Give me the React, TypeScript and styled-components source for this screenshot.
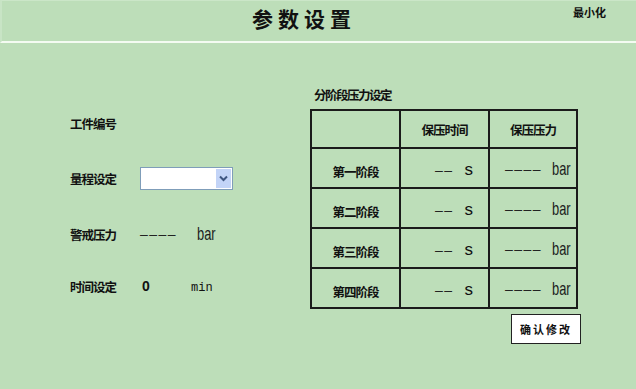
import React from "react";
import styled, { createGlobalStyle } from "styled-components";

const CJK = `"Noto Sans CJK SC", "DejaVu Sans", sans-serif`;

const GlobalStyle = createGlobalStyle`
  *, *::before, *::after {
    margin: 0;
    padding: 0;
    box-sizing: border-box;
  }
  body {
    background: #bddeb9;
    font-family: ${CJK};
    color: #111;
  }
`;

const stages = ["第一阶段", "第二阶段", "第三阶段", "第四阶段"];

function App() {
  return (
    <Page>
      <GlobalStyle />
      <Header>
        <Title>参数设置</Title>
        <Minimize>最小化</Minimize>
      </Header>
      <Body>
        <FormPanel>
          <FormRow $top={69}>
            <Label>工件编号</Label>
          </FormRow>
          <FormRow $top={33}>
            <Label>量程设定</Label>
            <Select>
              <SelectArrow>
                <svg width="9" height="7" viewBox="0 0 9 7">
                  <path d="M1 1.5 L4.5 5 L8 1.5" fill="none" stroke="#3f5680" strokeWidth="2" />
                </svg>
              </SelectArrow>
            </Select>
          </FormRow>
          <FormRow $top={34}>
            <Label>警戒压力</Label>
            <Dashes $width={57}>––––</Dashes>
            <Unit>bar</Unit>
          </FormRow>
          <FormRow $top={30}>
            <Label>时间设定</Label>
            <Zero>0</Zero>
            <Mono>min</Mono>
          </FormRow>
        </FormPanel>
        <StagePanel>
          <StageTitle>分阶段压力设定</StageTitle>
          <Table>
            <Cell />
            <HeadCell>保压时间</HeadCell>
            <HeadCell $shift={-3}>保压压力</HeadCell>
            {stages.map((s) => (
              <React.Fragment key={s}>
                <StageCell>{s}</StageCell>
                <TimeCell>
                  <Dashes>––</Dashes>
                  <Sec>s</Sec>
                </TimeCell>
                <PressCell>
                  <Dashes>––––</Dashes>
                  <Unit>bar</Unit>
                </PressCell>
              </React.Fragment>
            ))}
          </Table>
          <ButtonRow>
            <ConfirmButton>确认修改</ConfirmButton>
          </ButtonRow>
        </StagePanel>
      </Body>
    </Page>
  );
}

const Page = styled.div`
  width: 636px;
  height: 389px;
  display: flex;
  flex-direction: column;
  background: #bddeb9;
  overflow: hidden;
`;

const Header = styled.header`
  height: 43px;
  display: flex;
  align-items: flex-start;
  border-top: 1px solid #cbe6c8;
  border-left: 2px solid #c8e4c5;
  border-bottom: 2px solid #f4fbf2;
`;

const Title = styled.h1`
  margin-left: 250px;
  margin-top: 3px;
  font-size: 21px;
  line-height: 28px;
  font-weight: 700;
  letter-spacing: 5px;
`;

const Minimize = styled.span`
  margin-left: auto;
  margin-right: 30px;
  margin-top: 4px;
  font-size: 11px;
  line-height: 14px;
  font-weight: 700;
`;

const Body = styled.main`
  flex: 1;
  display: flex;
`;

const FormPanel = styled.section`
  width: 310px;
  padding-left: 70px;
  display: flex;
  flex-direction: column;
`;

const FormRow = styled.div<{ $top: number }>`
  margin-top: ${(p) => p.$top}px;
  height: 22px;
  display: flex;
  align-items: center;
`;

const Label = styled.span`
  width: 70px;
  font-size: 12.5px;
  font-weight: 700;
  letter-spacing: -1px;
`;

const Select = styled.div`
  width: 93px;
  height: 23px;
  background: #fff;
  border: 1px solid #7f9db9;
  display: flex;
  justify-content: flex-end;
  align-items: stretch;
  padding: 1px;
`;

const SelectArrow = styled.div`
  width: 15px;
  background: #c3d4f7;
  display: flex;
  align-items: center;
  justify-content: center;
`;

const Dashes = styled.span<{ $width?: number }>`
  width: ${(p) => (p.$width ? `${p.$width}px` : "auto")};
  font-family: "Liberation Sans", sans-serif;
  font-size: 14px;
  letter-spacing: 1.5px;
  color: #222;
`;

const Unit = styled.span`
  display: inline-block;
  font-family: "Liberation Sans", sans-serif;
  font-size: 19px;
  line-height: 22px;
  transform: scaleX(0.68);
  transform-origin: left center;
  color: #1c1c1c;
`;

const Zero = styled.span`
  width: 51px;
  padding-left: 2px;
  font-family: "Liberation Sans", sans-serif;
  font-weight: 700;
  font-size: 14px;
`;

const Mono = styled.span`
  padding-top: 3px;
  font-family: "Liberation Mono", monospace;
  font-size: 12px;
`;

const StagePanel = styled.section`
  padding-top: 44px;
  display: flex;
  flex-direction: column;
  width: 268px;
`;

const StageTitle = styled.h2`
  margin-left: 4px;
  font-size: 12.5px;
  line-height: 16px;
  font-weight: 700;
  letter-spacing: -1.5px;
`;

const Table = styled.div`
  margin-top: 6px;
  display: grid;
  grid-template-columns: 87px 87px 86px;
  grid-template-rows: 36px repeat(4, 38px);
  gap: 2px;
  padding: 2px;
  background: #1b1b1b;
`;

const Cell = styled.div`
  background: #bddeb9;
  display: flex;
  align-items: center;
`;

const HeadCell = styled(Cell)<{ $shift?: number }>`
  justify-content: center;
  padding-left: ${(p) => (p.$shift ? p.$shift * 2 : 0)}px;
  font-size: 12.5px;
  font-weight: 700;
  letter-spacing: -1px;
`;

const StageCell = styled(Cell)`
  justify-content: center;
  padding-top: 6px;
  font-size: 12.5px;
  font-weight: 700;
  letter-spacing: -1px;
`;

const TimeCell = styled(Cell)`
  padding-left: 34px;
  padding-top: 4px;
  gap: 11px;
`;

const PressCell = styled(Cell)`
  padding-left: 15px;
  padding-top: 2px;
  gap: 10px;
`;

const Sec = styled.span`
  font-family: "Liberation Sans", sans-serif;
  font-size: 17px;
`;

const ButtonRow = styled.div`
  display: flex;
  justify-content: flex-end;
  margin-top: 5px;
  margin-right: -3px;
`;

const ConfirmButton = styled.button`
  width: 70px;
  height: 30px;
  background: #fff;
  border: 1px solid #222;
  font-family: ${CJK};
  font-size: 11px;
  font-weight: 700;
  letter-spacing: 2px;
  color: #111;
  cursor: pointer;
`;

export default App;
